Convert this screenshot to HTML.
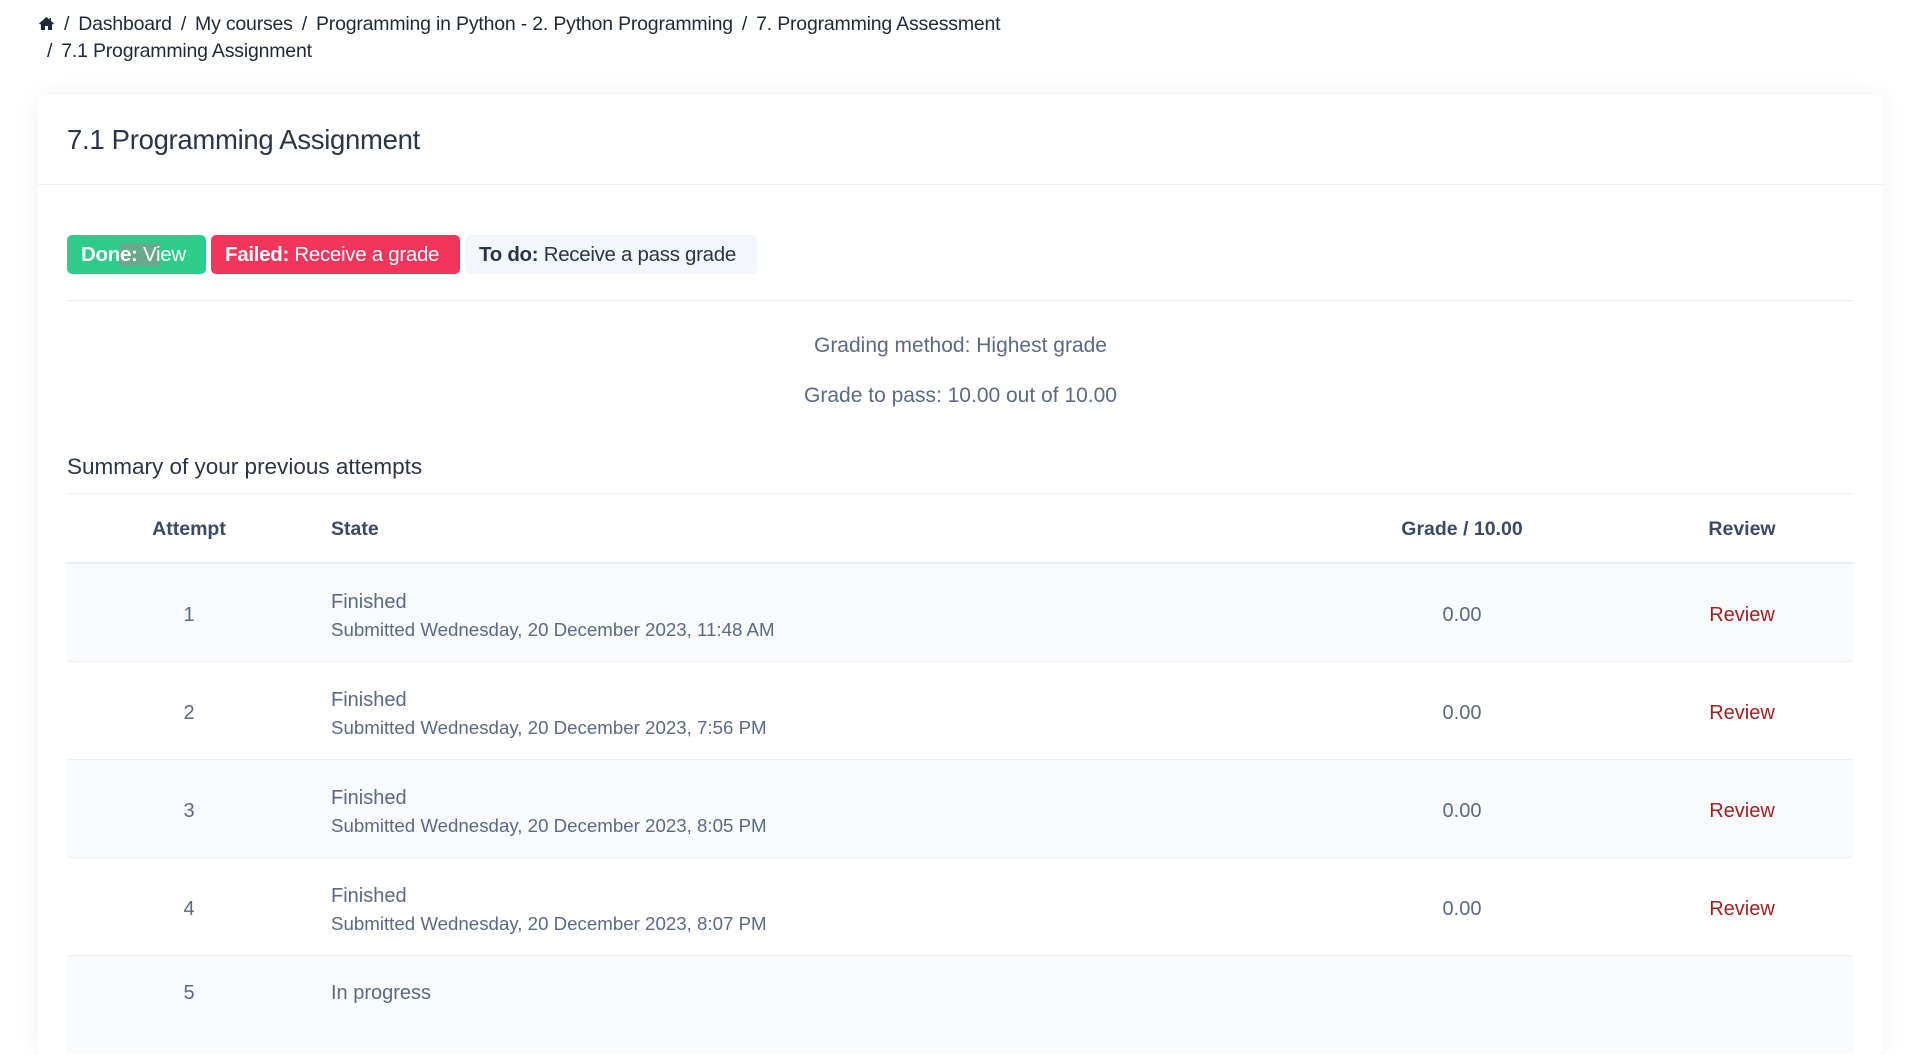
<!DOCTYPE html>
<html><head><meta charset="utf-8"><style>
*{margin:0;padding:0;box-sizing:border-box}
body{width:1920px;height:1030px;overflow:hidden;background:#fff;font-family:"Liberation Sans",sans-serif;color:#2a3547}
.bc{position:absolute;left:38px;top:11px;font-size:19.5px;color:#1f2937;line-height:27px;letter-spacing:-0.2px;white-space:nowrap}
.bc span.s{margin:0 9px}
.card{position:absolute;left:38px;top:95px;width:1845px;height:960px;background:#fff;border-radius:6px;box-shadow:0 0 24px rgba(0,0,0,0.06)}
.title{position:absolute;left:29px;top:29px;font-size:27.5px;color:#2a3547;letter-spacing:-0.3px}
.hdiv{position:absolute;left:0;right:0;top:89px;border-top:1px solid #eef0f3}
.badge{position:absolute;top:140px;height:39px;border-radius:5px;font-size:20.5px;line-height:39px;padding:0 14px;letter-spacing:-0.3px;white-space:nowrap}
.b1{left:29px;width:139px;background:#2ecc8a;color:#fff}
.b2{left:173px;width:249px;background:#f2355b;color:#fff}
.b3{left:427px;width:292px;background:#f3f7fb;color:#2a3547}
.div2{position:absolute;left:29px;width:1786px;top:205px;border-top:1px solid #eef0f3}
.center{position:absolute;left:0;width:1845px;text-align:center;font-size:21px;color:#5a6a85}
.sum{position:absolute;left:29px;top:359px;font-size:22.5px;color:#2a3547}
.tbl{position:absolute;left:29px;width:1786px;top:398px}
.tbl .hr{height:71px;border-top:1px solid #eef0f3;border-bottom:2px solid #e8ebef;position:relative;font-size:19.5px;color:#3b4a64;font-weight:bold}
.row{height:98px;border-bottom:1px solid #eceff3;position:relative;font-size:20px;color:#5a6a85;white-space:nowrap}
.row.l{background:#f9fafc}
.c1{position:absolute;left:72px;width:100px;text-align:center}
.c2{position:absolute;left:264px;white-space:nowrap}
.c3{position:absolute;left:1295px;width:200px;text-align:center;white-space:nowrap}
.c4{position:absolute;left:1575px;width:200px;text-align:center}
.hr div{top:24px}
.row .c1,.row .c3,.row .c4{top:40px}
.row .st{top:27px}
.row .sub{top:55px;font-size:18.7px}
.rev{color:#a32020}
</style></head><body>
<div class="bc"><svg width="17" height="15" viewBox="0 0 17 15" style="vertical-align:-1px"><path d="M8.5 1 L1 7.5 L2.2 8.6 L3 8 V14 H7 V10 H10 V14 H14 V8 L14.8 8.6 L16 7.5 L13 4.9 V2 H11.5 V3.6 Z" fill="#1f2937"/></svg><span class="s">/</span>Dashboard<span class="s">/</span>My courses<span class="s">/</span>Programming in Python - 2. Python Programming<span class="s">/</span>7. Programming Assessment<br><span class="s" style="margin-left:9px">/</span>7.1 Programming Assignment</div>
<div class="card">
<div class="title">7.1 Programming Assignment</div>
<div class="hdiv"></div>
<div class="badge b1"><b>Don<span style="background:#6aa88d">e:</span></b><span style="background:#6aa88d"> Vi</span>ew</div>
<div class="badge b2"><b>Failed:</b> Receive a grade</div>
<div class="badge b3"><b>To do:</b> Receive a pass grade</div>
<div class="div2"></div>
<div class="center" style="top:239px">Grading method: Highest grade</div>
<div class="center" style="top:289px">Grade to pass: 10.00 out of 10.00</div>
<div class="sum">Summary of your previous attempts</div>
<div class="tbl">
<div class="hr"><div class="c1">Attempt</div><div class="c2">State</div><div class="c3">Grade / 10.00</div><div class="c4">Review</div></div>
<div class="row l"><div class="c1">1</div><div class="c2 st">Finished</div><div class="c2 sub">Submitted Wednesday, 20 December 2023, 11:48 AM</div><div class="c3">0.00</div><div class="c4 rev">Review</div></div>
<div class="row"><div class="c1">2</div><div class="c2 st">Finished</div><div class="c2 sub">Submitted Wednesday, 20 December 2023, 7:56 PM</div><div class="c3">0.00</div><div class="c4 rev">Review</div></div>
<div class="row l"><div class="c1">3</div><div class="c2 st">Finished</div><div class="c2 sub">Submitted Wednesday, 20 December 2023, 8:05 PM</div><div class="c3">0.00</div><div class="c4 rev">Review</div></div>
<div class="row"><div class="c1">4</div><div class="c2 st">Finished</div><div class="c2 sub">Submitted Wednesday, 20 December 2023, 8:07 PM</div><div class="c3">0.00</div><div class="c4 rev">Review</div></div>
<div class="row l" style="border:none"><div class="c1" style="top:26px">5</div><div class="c2" style="top:26px">In progress</div></div>
</div>
</div>
</body></html>
